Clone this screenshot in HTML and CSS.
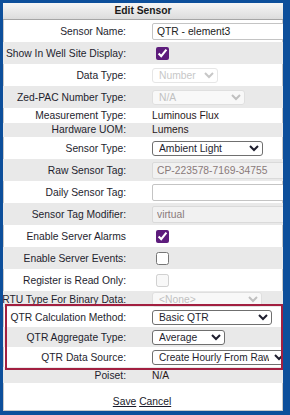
FILE: index.html
```html
<!DOCTYPE html>
<html>
<head>
<meta charset="utf-8">
<link rel="stylesheet" href="styles.css">
</head>
<body>
<div class="panel">
  <div class="header">Edit Sensor</div>
  <div class="form">
    <div class="row r-ctl"><span class="lbl">Sensor Name:</span><div class="val"><input class="txt" type="text" value="QTR - element3"></div></div>
    <div class="row r-ctl"><span class="lbl">Show In Well Site Display:</span><div class="val"><input class="chk" type="checkbox" checked></div></div>
    <div class="row r-ctl"><span class="lbl">Data Type:</span><div class="val"><select class="sel w-number" disabled><option>Number</option></select></div></div>
    <div class="row r-ctl"><span class="lbl">Zed-PAC Number Type:</span><div class="val"><select class="sel w-na" disabled><option>N/A</option></select></div></div>
    <div class="row r-txt"><span class="lbl">Measurement Type:</span><div class="val">Luminous Flux</div></div>
    <div class="row r-txt"><span class="lbl">Hardware UOM:</span><div class="val">Lumens</div></div>
    <div class="row r-ctl"><span class="lbl">Sensor Type:</span><div class="val"><select class="sel w-ambient"><option>Ambient Light</option></select></div></div>
    <div class="row r-ctl"><span class="lbl">Raw Sensor Tag:</span><div class="val"><input class="txt" type="text" value="CP-223578-7169-34755" disabled></div></div>
    <div class="row r-ctl"><span class="lbl">Daily Sensor Tag:</span><div class="val"><input class="txt" type="text" value=""></div></div>
    <div class="row r-ctl"><span class="lbl">Sensor Tag Modifier:</span><div class="val"><input class="txt" type="text" value="virtual" disabled></div></div>
    <div class="row r-ctl"><span class="lbl">Enable Server Alarms</span><div class="val"><input class="chk" type="checkbox" checked></div></div>
    <div class="row r-ctl"><span class="lbl">Enable Server Events:</span><div class="val"><input class="chk" type="checkbox"></div></div>
    <div class="row r-ctl"><span class="lbl">Register is Read Only:</span><div class="val"><input class="chk" type="checkbox" disabled></div></div>
    <div class="row r-rtu"><span class="lbl">RTU Type For Binary Data:</span><div class="val"><select class="sel w-none" disabled><option>&lt;None&gt;</option></select></div></div>
    <div class="row r-qtr"><span class="lbl">QTR Calculation Method:</span><div class="val"><select class="sel w-basic"><option>Basic QTR</option></select></div></div>
    <div class="row r-qtr"><span class="lbl">QTR Aggregate Type:</span><div class="val"><select class="sel w-avg"><option>Average</option></select></div></div>
    <div class="row r-qtr"><span class="lbl">QTR Data Source:</span><div class="val"><select class="sel w-create"><option>Create Hourly From Raw</option></select></div></div>
    <div class="row r-last"><span class="lbl">Poiset:</span><div class="val">N/A</div></div>
  </div>
  <div class="actions"><a href="#" class="lnk">Save</a> <a href="#" class="lnk">Cancel</a></div>
  <div class="highlight"></div>
</div>
</body>
</html>
```
FILE: styles.css
```css
html, body {
  margin: 0;
  padding: 0;
}
body {
  background: #0d4f9b;
  width: 290px;
  height: 415px;
  overflow: hidden;
  font-family: "Liberation Sans", Arial, sans-serif;
  font-size: 10.3px;
  color: #1e1e2e;
}
.panel {
  position: relative;
  margin: 3px 7px 4px 3px;
  width: 280px;
  height: 408px;
  background: #fff;
  overflow: hidden;
  box-shadow: inset 0 0 0 1px #c9c9c9;
}
.header {
  height: 16px;
  line-height: 16px;
  text-align: center;
  font-weight: bold;
  background: linear-gradient(#f6f6f6, #dcdcdc);
  border-bottom: 1px solid #a5a5a5;
  color: #1a1a1a;
}
.row {
  display: grid;
  grid-template-columns: 123px 1fr;
  column-gap: 26px;
  align-items: center;
}
.row:nth-child(even) {
  background: #e9e9e9;
}
.r-ctl { height: 22px; }
.r-txt { height: 14.5px; }
.r-rtu { height: 16px; }
.r-qtr { height: 20px; }
.r-last { height: 16px; }
.lbl {
  display: flex;
  justify-content: flex-end;
  white-space: nowrap;
  min-width: 0;
}
.val {
  display: flex;
  align-items: center;
  white-space: nowrap;
  color: #2a1a1a;
  min-width: 0;
}
.txt {
  box-sizing: border-box;
  width: 134px;
  height: 17px;
  margin: 0;
  padding: 0 4px;
  font: inherit;
  color: #222;
  border: 1px solid #c4c4c4;
  border-radius: 2px;
  background: #fff;
  flex: none;
}
.txt:disabled {
  background: #f1f1f1;
  border-color: #dadada;
  color: #8a7a7a;
}
.chk {
  width: 13px;
  height: 13px;
  margin: 0 0 0 4px;
  accent-color: #5d1c7c;
}
.sel {
  box-sizing: border-box;
  height: 15px;
  margin: 0;
  padding: 0 2px;
  font: inherit;
  color: #1e1e2e;
  border: 1px solid #6f6f6f;
  border-radius: 3px;
  background: #fff;
  flex: none;
}
.sel:disabled {
  color: #b0b0b0;
  border-color: #dcdcdc;
  background: #fff;
}
.w-number { width: 66px; }
.w-na { width: 93px; }
.w-ambient { width: 111px; }
.w-none { width: 110px; }
.w-basic { width: 120px; }
.w-avg { width: 73px; }
.w-create { width: 136px; font-size: 10.1px; }
.actions {
  margin-top: 13px;
  text-align: center;
  padding-right: 2px;
}
.lnk {
  color: #1a1a2a;
  text-decoration: underline;
}
.highlight {
  position: absolute;
  box-sizing: border-box;
  left: 2px;
  right: 0;
  top: 301px;
  height: 66px;
  border: 2.5px solid #a21f40;
  pointer-events: none;
}
```
